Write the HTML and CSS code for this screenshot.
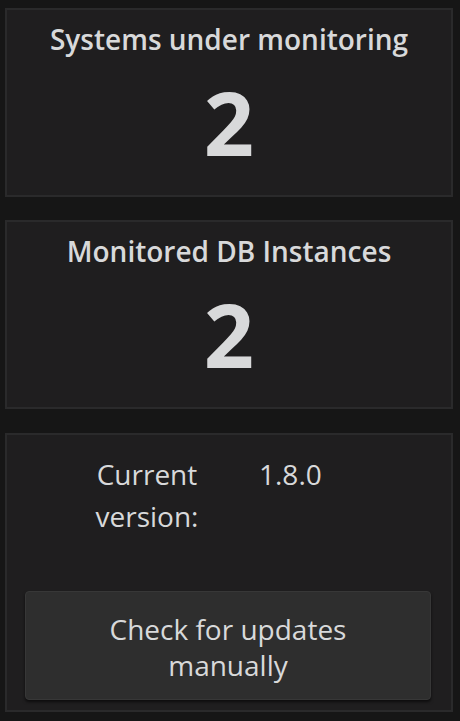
FILE: index.html
```html
<!DOCTYPE html>
<html>
<head>
<meta charset="utf-8">
<link rel="stylesheet" href="styles.css">
</head>
<body>
<div class="page">
  <div class="card stat">
    <div class="title">Systems under monitoring</div>
    <div class="value">2</div>
  </div>
  <div class="card stat">
    <div class="title">Monitored DB Instances</div>
    <div class="value">2</div>
  </div>
  <div class="card version-card">
    <div class="version-row">
      <div class="label">Current version:</div>
      <div class="ver">1.8.0</div>
    </div>
    <button class="btn">Check for updates manually</button>
  </div>
</div>
</body>
</html>
```
FILE: styles.css
```css
html, body {
  margin: 0;
  padding: 0;
  background: #161616;
}
body {
  font-family: "Open Sans", "Liberation Sans", sans-serif;
  color: #d8d9da;
}
.page {
  padding: 8px 7px 0 5px;
  display: flex;
  flex-direction: column;
  gap: 23px;
}
.card {
  background: #1f1e1f;
  border: 2px solid #2a2a2b;
  box-sizing: border-box;
}
.stat {
  height: 189px;
  padding-top: 11px;
  text-align: center;
}
.title {
  font-size: 28px;
  font-weight: 600;
  line-height: 36px;
}
.value {
  font-size: 88px;
  font-weight: 700;
  line-height: 88px;
  margin-top: 21px;
}
.version-card {
  margin-top: 1px;
  height: 279px;
  padding: 18px 20px 0 18px;
}
.version-row {
  display: flex;
  font-size: 28px;
  line-height: 42px;
}
.label {
  width: 112px;
  margin-left: 66px;
  text-align: center;
}
.ver {
  margin-left: 56px;
}
.btn {
  display: block;
  width: 100%;
  margin-top: 54px;
  height: 109px;
  background: #2e2e2e;
  border: 1px solid #373737;
  border-radius: 4px;
  box-shadow: 0 2px 3px rgba(0,0,0,0.6);
  color: #d8d9da;
  font-family: "Open Sans", "Liberation Sans", sans-serif;
  font-size: 28px;
  line-height: 36px;
  padding: 18px 60px 15px;
  box-sizing: border-box;
}
```
